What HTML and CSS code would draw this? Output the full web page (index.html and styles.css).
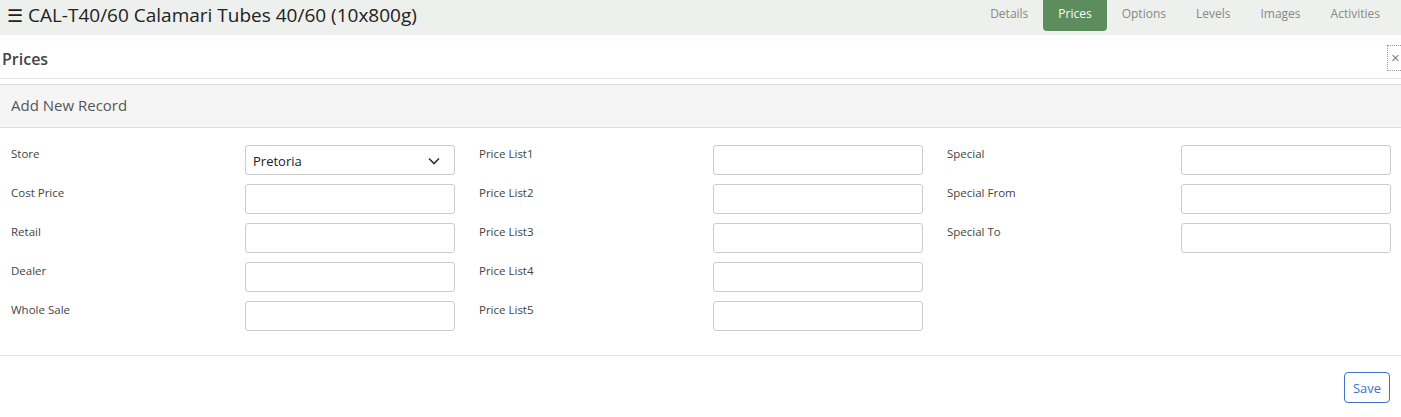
FILE: index.html
```html
<!DOCTYPE html>
<html>
<head>
<meta charset="utf-8">
<link rel="stylesheet" href="styles.css">
</head>
<body>
<header class="topbar">
  <h1 class="title"><span class="burger">☰</span> CAL-T40/60 Calamari Tubes 40/60 (10x800g)</h1>
  <nav class="tabs">
    <a class="tab">Details</a>
    <a class="tab active">Prices</a>
    <a class="tab">Options</a>
    <a class="tab">Levels</a>
    <a class="tab">Images</a>
    <a class="tab">Activities</a>
  </nav>
</header>
<section class="section">
  <div class="section-head">
    <h2 class="section-title">Prices</h2>
    <button class="close">×</button>
  </div>
  <div class="panel">
    <div class="panel-head">Add New Record</div>
    <div class="panel-body">
      <div class="col">
        <div class="field"><label>Store</label><div class="select"><span>Pretoria</span><svg width="12" height="8" viewBox="0 0 12 8"><path d="M1 1.5l5 5 5-5" fill="none" stroke="#333" stroke-width="1.6"/></svg></div></div>
        <div class="field"><label>Cost Price</label><input type="text"></div>
        <div class="field"><label>Retail</label><input type="text"></div>
        <div class="field"><label>Dealer</label><input type="text"></div>
        <div class="field"><label>Whole Sale</label><input type="text"></div>
      </div>
      <div class="col">
        <div class="field"><label>Price List1</label><input type="text"></div>
        <div class="field"><label>Price List2</label><input type="text"></div>
        <div class="field"><label>Price List3</label><input type="text"></div>
        <div class="field"><label>Price List4</label><input type="text"></div>
        <div class="field"><label>Price List5</label><input type="text"></div>
      </div>
      <div class="col">
        <div class="field"><label>Special</label><input type="text"></div>
        <div class="field"><label>Special From</label><input type="text"></div>
        <div class="field"><label>Special To</label><input type="text"></div>
      </div>
    </div>
    <div class="panel-foot">
      <button class="save">Save</button>
    </div>
  </div>
</section>
</body>
</html>
```
FILE: styles.css
```css
* { box-sizing: border-box; }
html, body { margin: 0; padding: 0; background: #fff; }
body {
  font-family: "Open Sans", "Noto Sans", "Liberation Sans", sans-serif;
  color: #333;
  width: 1401px;
  overflow: hidden;
}
.topbar {
  height: 35px;
  background: #edf0ed;
  display: flex;
  justify-content: space-between;
  align-items: flex-start;
}
.title {
  margin: 0;
  padding: 2px 0 0 7px;
  font-weight: 400;
  font-size: 19px;
  line-height: 26px;
  color: #222;
}
.burger { font-size: 18px; }
.tabs {
  display: flex;
  padding-right: 6px;
}
.tab {
  display: block;
  font-size: 12px;
  color: #888;
  height: 31px;
  line-height: 28px;
  padding: 0 15px;
  border-radius: 0 0 4px 4px;
}
.tab.active {
  background: #5d8c5d;
  color: #fff;
}
.section-head {
  display: flex;
  justify-content: space-between;
  align-items: flex-start;
  height: 44px;
  border-bottom: 1px solid #e5e5e5;
}
.section-title {
  margin: 0;
  padding: 13px 0 0 2px;
  font-size: 16px;
  font-weight: 600;
  color: #444;
  line-height: 22px;
}
.close {
  margin-top: 10px;
  width: 14px;
  height: 26px;
  padding: 0 0 0 3px;
  border: 1px dotted #999;
  border-right: none;
  background: transparent;
  color: #888;
  font-size: 15px;
  line-height: 22px;
  text-align: left;
  overflow: hidden;
  font-family: "Liberation Sans", sans-serif;
}
.panel {
  margin-top: 5px;
  border-top: 1px solid #ddd;
}
.panel-head {
  background: #f5f5f5;
  border-bottom: 1px solid #ddd;
  height: 43px;
  padding: 10px 11px;
  font-size: 15px;
  line-height: 20px;
  color: #555;
}
.panel-body {
  display: grid;
  grid-template-columns: 468px 468px 468px;
  padding: 17px 0 0 11px;
  height: 228px;
  border-bottom: 1px solid #e2e2e2;
}
.col {
  display: flex;
  flex-direction: column;
  gap: 9px;
}
.field {
  display: grid;
  grid-template-columns: 234px 210px;
  height: 30px;
}
.field label {
  font-size: 11.5px;
  color: #444;
  padding-top: 1px;
  line-height: 16px;
}
.field input, .select {
  width: 210px;
  height: 30px;
  border: 1px solid #ccc;
  border-radius: 3px;
  background: #fff;
  margin: 0;
  font: inherit;
}
.select {
  display: flex;
  justify-content: space-between;
  align-items: center;
  padding: 2px 14px 0 7px;
  font-size: 13px;
  color: #222;
}
.panel-foot {
  display: flex;
  justify-content: flex-end;
  padding: 16px 11px 0 0;
}
.save {
  width: 46px;
  height: 31px;
  border: 1px solid #3d72c7;
  border-radius: 4px;
  background: #fff;
  color: #3d72c7;
  font-family: inherit;
  font-size: 13px;
  padding: 0;
}
```
